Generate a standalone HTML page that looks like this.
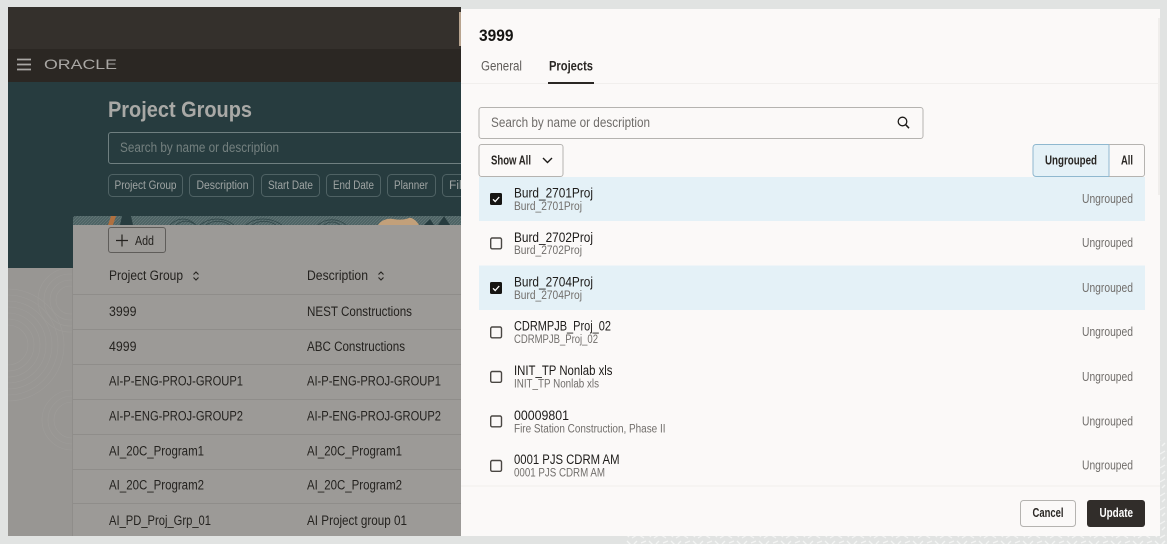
<!DOCTYPE html>
<html lang="en">
<head>
<meta charset="utf-8">
<title>Project Groups</title>
<style>
html,body{margin:0;padding:0;width:1167px;height:544px;overflow:hidden;background:#e1e3e2}
svg{display:block;filter:blur(.3px)}
text{font-family:"Liberation Sans",sans-serif;font-size:13.5px}
.dim{fill:#24221f}
.b{font-weight:bold}
.t{fill:#1d1b19;font-size:13.5px}
.s{fill:#716e6b;font-size:11.5px}
.u{fill:#716e6b;font-size:12.5px}
.cb{fill:none;stroke:#4a4743;stroke-width:1.4}
</style>
</head>
<body>
<svg width="1167" height="544" viewBox="0 0 1167 544" xmlns="http://www.w3.org/2000/svg">
<defs>
<pattern id="leaf" width="22" height="14" patternUnits="userSpaceOnUse">
<path d="M1 3l5 3M9 1l4 4M16 6l5-3M3 11l5-2M11 9l4 4M18 12l3-3" stroke="#f3f4f3" stroke-width="1.3" fill="none"/>
</pattern>
<pattern id="fine" width="3" height="3" patternUnits="userSpaceOnUse">
<path d="M0 3L3 0" stroke="#8d9b9b" stroke-width=".6"/>
</pattern>
<clipPath id="leftclip"><rect x="8" y="268" width="65" height="268"/></clipPath>
</defs>

<rect width="1167" height="544" fill="#e1e3e2"/>
<rect x="625" y="536" width="542" height="8" fill="url(#leaf)"/>
<rect x="1160" y="440" width="7" height="104" fill="url(#leaf)"/>

<!-- left dimmed page -->
<rect x="8" y="7" width="453" height="42" fill="#34302c"/>
<rect x="8" y="49" width="453" height="33" fill="#2b2723"/>
<rect x="8" y="82" width="453" height="186" fill="#273c3f"/>
<rect x="8" y="268" width="453" height="268" fill="#989693"/>
<g fill="none" stroke="#9e9c99" stroke-width=".6" clip-path="url(#leftclip)">
<circle cx="8" cy="345" r="20"/><circle cx="8" cy="345" r="26"/><circle cx="8" cy="345" r="32"/><circle cx="8" cy="345" r="38"/><circle cx="8" cy="345" r="44"/><circle cx="8" cy="345" r="50"/><circle cx="8" cy="345" r="56"/>
<circle cx="70" cy="300" r="14"/><circle cx="70" cy="300" r="20"/><circle cx="70" cy="300" r="26"/><circle cx="70" cy="300" r="32"/>
<circle cx="72" cy="420" r="18"/><circle cx="72" cy="420" r="24"/><circle cx="72" cy="420" r="30"/>
</g>

<!-- header -->
<path d="M17 59.500h14M17 64.500h14M17 69.500h14" stroke="#a9a7a4" stroke-width="1.700"/>
<text x="44" y="69" fill="#a9a7a4" style="font-size:14px" textLength="73" lengthAdjust="spacingAndGlyphs">ORACLE</text>

<!-- title and filters -->
<text x="108" y="117" class="b" fill="#a9a9a6" style="font-size:22px" textLength="144" lengthAdjust="spacingAndGlyphs">Project Groups</text>
<rect x="108.500" y="132.500" width="360" height="31" rx="2.500" fill="none" stroke="#6f7f80"/>
<text x="120" y="152" fill="#74807f" textLength="159" lengthAdjust="spacingAndGlyphs">Search by name or description</text>
<g fill="none" stroke="#4f6264">
<rect x="108.500" y="174.500" width="74" height="22" rx="4"/>
<rect x="189.500" y="174.500" width="64" height="22" rx="4"/>
<rect x="261.500" y="174.500" width="58" height="22" rx="4"/>
<rect x="326.500" y="174.500" width="54" height="22" rx="4"/>
<rect x="387.500" y="174.500" width="48" height="22" rx="4"/>
<rect x="442.500" y="174.500" width="40" height="22" rx="4"/>
</g>
<g fill="#a0a5a4">
<text x="114.500" y="189" style="font-size:11.500px" textLength="62" lengthAdjust="spacingAndGlyphs">Project Group</text>
<text x="196.500" y="189" style="font-size:11.500px" textLength="52" lengthAdjust="spacingAndGlyphs">Description</text>
<text x="268" y="189" style="font-size:11.500px" textLength="45" lengthAdjust="spacingAndGlyphs">Start Date</text>
<text x="333" y="189" style="font-size:11.500px" textLength="41" lengthAdjust="spacingAndGlyphs">End Date</text>
<text x="394" y="189" style="font-size:11.500px" textLength="34" lengthAdjust="spacingAndGlyphs">Planner</text>
<text x="449" y="189" style="font-size:11.500px" textLength="16" lengthAdjust="spacingAndGlyphs">Filt</text>
</g>

<!-- card -->
<path d="M73 225v-6a3 3 0 0 1 3-3h385v9z" fill="#4d6364"/>
<rect x="73" y="216" width="388" height="9" fill="url(#fine)" opacity=".45"/>
<path d="M108 225l3-9h5l-3 9z" fill="#b0703f"/>
<path d="M120 225l2-9h9l2 9z" fill="#273c3f"/>
<path d="M378 225c3-5 10-7 15-6 6 1 11 1 16-1 3-1 8 3 10 7z" fill="#c2a07a"/>
<path d="M424 225l6-6 4 6zM438 225l6-9 6 9z" fill="#273c3f"/>
<g fill="none" stroke="#2f4547" stroke-width=".7">
<path d="M170 225c8-8 18-8 26 0M176 225c6-5 13-5 20 0"/>
<path d="M200 225c10-8 24-8 34 0M206 225c7-5 17-5 24 0"/>
<path d="M246 225c10-8 24-8 36 0M252 225c7-5 17-5 24 0"/>
<path d="M318 225c8-7 20-7 28 0M324 225c5-4 11-4 16 0"/>
</g>
<rect x="73" y="225" width="388" height="311" fill="#9c9a97"/>
<rect x="72" y="268" width="1" height="268" fill="#8f8d8a"/>

<rect x="108.500" y="227.500" width="57" height="25" rx="2.500" fill="none" stroke="#5f5d5a"/>
<path d="M122 234.500v12M116 240.500h12" stroke="#24221f" stroke-width="1.200"/>
<text x="135" y="245" class="dim" style="font-size:12.500px" textLength="19" lengthAdjust="spacingAndGlyphs">Add</text>

<text x="109" y="280" class="dim" textLength="74" lengthAdjust="spacingAndGlyphs">Project Group</text>
<path d="M193.500 274.500l2.500-2.500 2.500 2.500M193.500 277.500l2.500 2.500 2.500-2.500" fill="none" stroke="#24221f" stroke-width="1.100"/>
<text x="307" y="280" class="dim" textLength="61" lengthAdjust="spacingAndGlyphs">Description</text>
<path d="M378.500 274.500l2.500-2.500 2.500 2.500M378.500 277.500l2.500 2.500 2.500-2.500" fill="none" stroke="#24221f" stroke-width="1.100"/>

<path d="M73 294.500h388M73 329.500h388M73 364.500h388M73 399.500h388M73 434.500h388M73 469.500h388M73 503.500h388" stroke="#8f8d8a" fill="none"/>
<g class="dim">
<text x="109" y="316" textLength="27.500" lengthAdjust="spacingAndGlyphs">3999</text>
<text x="307" y="316" textLength="105" lengthAdjust="spacingAndGlyphs">NEST Constructions</text>
<text x="109" y="351" textLength="27.500" lengthAdjust="spacingAndGlyphs">4999</text>
<text x="307" y="351" textLength="98" lengthAdjust="spacingAndGlyphs">ABC Constructions</text>
<text x="109" y="385.500" textLength="134" lengthAdjust="spacingAndGlyphs">AI-P-ENG-PROJ-GROUP1</text>
<text x="307" y="385.500" textLength="134" lengthAdjust="spacingAndGlyphs">AI-P-ENG-PROJ-GROUP1</text>
<text x="109" y="420.500" textLength="134" lengthAdjust="spacingAndGlyphs">AI-P-ENG-PROJ-GROUP2</text>
<text x="307" y="420.500" textLength="134" lengthAdjust="spacingAndGlyphs">AI-P-ENG-PROJ-GROUP2</text>
<text x="109" y="455.500" textLength="95" lengthAdjust="spacingAndGlyphs">AI_20C_Program1</text>
<text x="307" y="455.500" textLength="95" lengthAdjust="spacingAndGlyphs">AI_20C_Program1</text>
<text x="109" y="489.500" textLength="95" lengthAdjust="spacingAndGlyphs">AI_20C_Program2</text>
<text x="307" y="489.500" textLength="95" lengthAdjust="spacingAndGlyphs">AI_20C_Program2</text>
<text x="109" y="525" textLength="102" lengthAdjust="spacingAndGlyphs">AI_PD_Proj_Grp_01</text>
<text x="307" y="525" textLength="100" lengthAdjust="spacingAndGlyphs">AI Project group 01</text>
</g>

<!-- drawer -->
<rect x="459" y="12" width="2" height="34" fill="#b8a48f"/>
<rect x="461" y="9" width="699" height="527" fill="#fbf9f8"/>
<rect x="1158" y="18" width="2" height="177" fill="#f0eeec"/>
<text x="479" y="41" class="b" fill="#161513" style="font-size:16.500px" textLength="34.500" lengthAdjust="spacingAndGlyphs">3999</text>
<text x="481" y="70.500" fill="#5f5c59" textLength="41" lengthAdjust="spacingAndGlyphs">General</text>
<text x="549" y="70.500" class="b" fill="#2a2724" textLength="44" lengthAdjust="spacingAndGlyphs">Projects</text>
<rect x="461" y="83" width="699" height="1" fill="#f1efed"/>
<rect x="548" y="82" width="46" height="2" fill="#2a2724"/>

<rect x="479" y="107.500" width="444" height="31" rx="2.500" fill="none" stroke="#b5b3b0"/>
<text x="491" y="127" fill="#6f6c69" textLength="159" lengthAdjust="spacingAndGlyphs">Search by name or description</text>
<circle cx="902.500" cy="121.500" r="4.300" fill="none" stroke="#1d1b19" stroke-width="1.300"/>
<path d="M905.700 124.700l3.300 3.500" stroke="#1d1b19" stroke-width="1.500"/>

<rect x="479" y="144.500" width="84" height="32" rx="2.500" fill="none" stroke="#b5b3b0"/>
<text x="491" y="164.500" class="b" fill="#2a2724" style="font-size:12.500px" textLength="40" lengthAdjust="spacingAndGlyphs">Show All</text>
<path d="M543 158l4.500 4.500 4.500-4.500" fill="none" stroke="#1d1b19" stroke-width="1.400"/>

<path d="M1109 144.500h-73a3 3 0 0 0-3 3v26a3 3 0 0 0 3 3h73z" fill="#e4f1f7" stroke="#8fb8cf"/>
<path d="M1109 144.500h33a2.500 2.500 0 0 1 2.500 2.500v27a2.500 2.500 0 0 1-2.500 2.500h-33" fill="none" stroke="#b5b3b0"/>
<text x="1045" y="164.500" class="b" fill="#2a2724" style="font-size:12.500px" textLength="52" lengthAdjust="spacingAndGlyphs">Ungrouped</text>
<text x="1121" y="164.500" class="b" fill="#2a2724" style="font-size:12.500px" textLength="12" lengthAdjust="spacingAndGlyphs">All</text>

<!-- rows -->
<rect x="479" y="177" width="666" height="44" fill="#e4f1f7"/>
<rect x="479" y="265.500" width="666" height="44.500" fill="#e4f1f7"/>

<rect x="490" y="193" width="12" height="12" rx="1.500" fill="#161513"/>
<path d="M493 199.300l2.200 2.200 4-4.500" fill="none" stroke="#fff" stroke-width="1.300"/>
<rect x="490.700" y="238" width="10.800" height="10.800" rx="1.500" class="cb"/>
<rect x="490" y="282" width="12" height="12" rx="1.500" fill="#161513"/>
<path d="M493 288.300l2.200 2.200 4-4.500" fill="none" stroke="#fff" stroke-width="1.300"/>
<rect x="490.700" y="327" width="10.800" height="10.800" rx="1.500" class="cb"/>
<rect x="490.700" y="371.500" width="10.800" height="10.800" rx="1.500" class="cb"/>
<rect x="490.700" y="416" width="10.800" height="10.800" rx="1.500" class="cb"/>
<rect x="490.700" y="460.500" width="10.800" height="10.800" rx="1.500" class="cb"/>

<text x="514" y="197.500" class="t" textLength="79" lengthAdjust="spacingAndGlyphs">Burd_2701Proj</text>
<text x="514" y="210" class="s" textLength="68" lengthAdjust="spacingAndGlyphs">Burd_2701Proj</text>
<text x="514" y="242" class="t" textLength="79" lengthAdjust="spacingAndGlyphs">Burd_2702Proj</text>
<text x="514" y="254" class="s" textLength="68" lengthAdjust="spacingAndGlyphs">Burd_2702Proj</text>
<text x="514" y="286.500" class="t" textLength="79" lengthAdjust="spacingAndGlyphs">Burd_2704Proj</text>
<text x="514" y="299" class="s" textLength="68" lengthAdjust="spacingAndGlyphs">Burd_2704Proj</text>
<text x="514" y="330.500" class="t" textLength="97" lengthAdjust="spacingAndGlyphs">CDRMPJB_Proj_02</text>
<text x="514" y="343" class="s" textLength="84" lengthAdjust="spacingAndGlyphs">CDRMPJB_Proj_02</text>
<text x="514" y="375" class="t" textLength="98.500" lengthAdjust="spacingAndGlyphs">INIT_TP Nonlab xls</text>
<text x="514" y="387.500" class="s" textLength="85" lengthAdjust="spacingAndGlyphs">INIT_TP Nonlab xls</text>
<text x="514" y="420" class="t" textLength="55" lengthAdjust="spacingAndGlyphs">00009801</text>
<text x="514" y="432.500" class="s" textLength="151.500" lengthAdjust="spacingAndGlyphs">Fire Station Construction, Phase II</text>
<text x="514" y="464" class="t" textLength="105.500" lengthAdjust="spacingAndGlyphs">0001 PJS CDRM AM</text>
<text x="514" y="476.500" class="s" textLength="91" lengthAdjust="spacingAndGlyphs">0001 PJS CDRM AM</text>

<text x="1082" y="203" class="u" textLength="51" lengthAdjust="spacingAndGlyphs">Ungrouped</text>
<text x="1082" y="247" class="u" textLength="51" lengthAdjust="spacingAndGlyphs">Ungrouped</text>
<text x="1082" y="292" class="u" textLength="51" lengthAdjust="spacingAndGlyphs">Ungrouped</text>
<text x="1082" y="336" class="u" textLength="51" lengthAdjust="spacingAndGlyphs">Ungrouped</text>
<text x="1082" y="381" class="u" textLength="51" lengthAdjust="spacingAndGlyphs">Ungrouped</text>
<text x="1082" y="425.500" class="u" textLength="51" lengthAdjust="spacingAndGlyphs">Ungrouped</text>
<text x="1082" y="469.500" class="u" textLength="51" lengthAdjust="spacingAndGlyphs">Ungrouped</text>

<rect x="461" y="485.500" width="699" height="1" fill="#f1efed"/>

<rect x="1020.500" y="500.500" width="55" height="26" rx="3" fill="#fbf9f8" stroke="#b5b3b0"/>
<text x="1032.500" y="517" class="b" fill="#2a2724" style="font-size:12.500px" textLength="31" lengthAdjust="spacingAndGlyphs">Cancel</text>
<rect x="1087" y="500" width="58" height="27" rx="3" fill="#312d2a"/>
<text x="1099.500" y="517" class="b" fill="#fff" style="font-size:12.500px" textLength="33.500" lengthAdjust="spacingAndGlyphs">Update</text>
</svg>
</body>
</html>
